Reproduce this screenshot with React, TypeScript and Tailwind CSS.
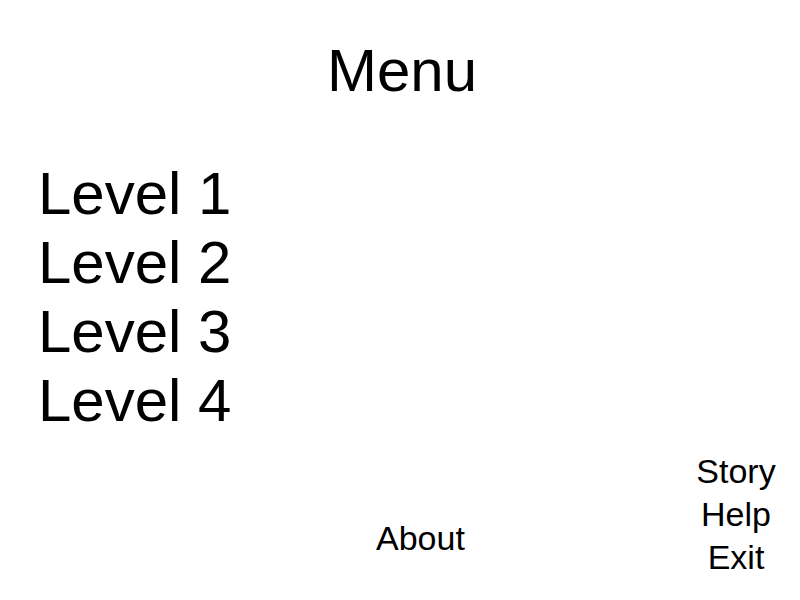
export default function App() {
  const levels = ['Level 1', 'Level 2', 'Level 3', 'Level 4']

  return (
    <div className="w-[800px] h-[600px] bg-white text-black font-['Liberation_Sans',Arial,sans-serif] overflow-hidden">
      <h1 className="pt-[36px] text-center text-[60px] leading-[69px] pl-[4px]">Menu</h1>

      <ul className="mt-[54px] pl-[38px]">
        {levels.map((level) => (
          <li key={level} className="text-[60px] leading-[69px]">
            {level}
          </li>
        ))}
      </ul>

      <div className="mt-[15px] flex items-start text-[34px] leading-[43px]">
        <div className="ml-[376px] mt-[67px]">About</div>
        <div className="ml-auto mr-[4px] w-[120px] flex flex-col items-center">
          <span>Story</span>
          <span>Help</span>
          <span>Exit</span>
        </div>
      </div>
    </div>
  )
}
